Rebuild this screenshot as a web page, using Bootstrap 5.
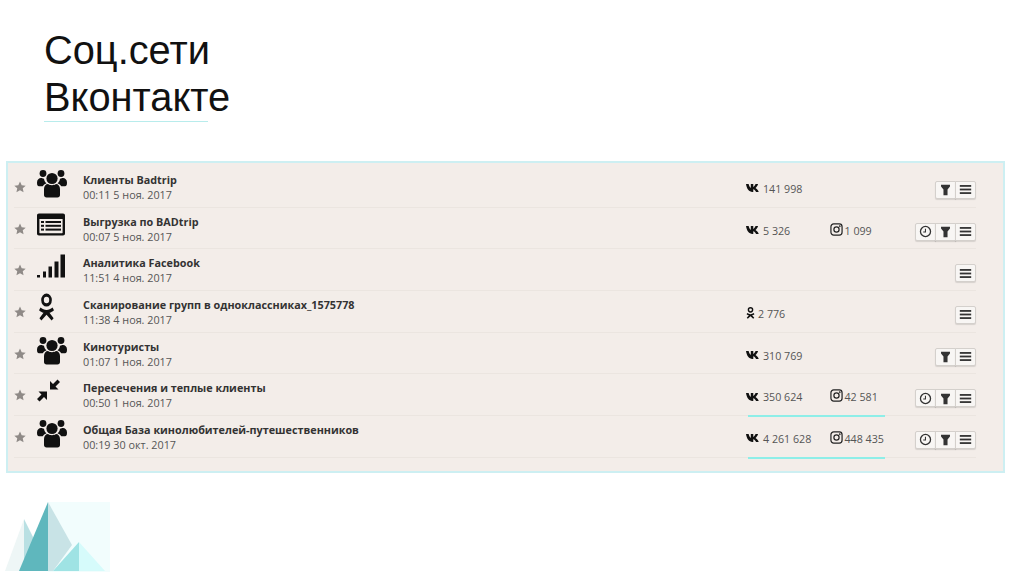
<!DOCTYPE html>
<html lang="ru">
<head>
  <meta charset="UTF-8">
  <meta name="viewport" content="width=device-width, initial-scale=1">
  <title>Соц.сети Вконтакте</title>
  <link href="https://cdn.jsdelivr.net/npm/bootstrap@5.3.2/dist/css/bootstrap.min.css" rel="stylesheet">
  <style>
    body {
      background: #fff;
      height: 574px;
      overflow: hidden;
      font-family: "Open Sans", sans-serif;
    }
    .slide-title {
      font-family: "Liberation Sans", sans-serif;
      font-size: 39.8px;
      line-height: 47px;
      font-weight: 400;
      color: #111;
      margin: 27px 0 0 44px;
      width: 164px;
      white-space: nowrap;
      border-bottom: 1px solid #b8ecec;
      height: 95px;
    }
    .panel-box {
      margin: 39px 19px 0 6px;
      height: 312px;
      background: #f3ede9;
      border: 2px solid #cdeff2;
      padding: 3px 27px 0 6px;
    }
    .task-row {
      height: 41.7px;
      border-bottom: 1px solid #ebe5e0;
    }
    .star-ic { width: 12px; height: 12px; fill: #8f8a87; margin-top: 1px; flex: none; }
    .type-col { width: 47px; margin-bottom: 5px; margin-left: 10px; flex: none; }
    .type-ic { width: 32px; height: 32px; fill: #111; display: block; }
    .task-text { padding-top: 1px; }
    .task-name { font-size: 10.8px; line-height: 15px; font-weight: 700; color: #333; white-space: nowrap; }
    .task-date { font-size: 10.8px; line-height: 15px; color: #555; white-space: nowrap; }
    .stats-col { position: absolute; left: 732px; top: 0; bottom: 0; display: flex; align-items: center; font-size: 10.7px; color: #555; padding-top: 5px; }
    .stat-item { width: 83.5px; display: flex; align-items: center; gap: 2px; white-space: nowrap; }
    .stat-item svg { width: 15px; height: 12px; fill: #111; flex: none; margin-top: -1px; }
    .stat-item svg.ig-ic { width: 13px; height: 13px; margin-top: -3px; fill: none; stroke: #222; stroke-width: 1.3; }
    .stat-item svg.ok-ic { width: 9px; height: 14px; margin-right: 1px; }
    .hl-line { position: absolute; left: 2px; bottom: -2px; width: 137px; height: 2px; background: #8eeee8; }
    .act-group { margin-top: 7px; }
    .act-group .btn {
      width: 21px;
      height: 18px;
      padding: 0;
      display: flex;
      align-items: center;
      justify-content: center;
      background: #f8f6f4;
      border: 1px solid #d4d0cc;
      border-radius: 2px;
      box-shadow: 0 1px 1px rgba(0,0,0,.12);
    }
    .act-group .btn svg { width: 13px; height: 13px; fill: #333; }
    .logo-mark { display: block; margin-top: 27px; }
  </style>
</head>
<body>

<svg width="0" height="0" class="position-absolute">
  <symbol id="i-star" viewBox="0 0 24 24"><path d="M12 1l3.400 7.300 8 1-5.900 5.400 1.600 7.900L12 18.700l-7.100 3.900 1.600-7.900L.6 9.300l8-1z"/></symbol>
  <symbol id="i-users" viewBox="0 0 32 32">
    <circle cx="16" cy="10.500" r="5.600"/><circle cx="7" cy="5.500" r="3.400"/><circle cx="25" cy="5.500" r="3.400"/>
    <path d="M1 14.500c0-3 2-4.500 4-4.500 1 0 1.500.6 3 .8.300 2 1.200 3.500 2.500 4.500-2 .8-3 1.800-3.800 3H3c-1.500 0-2-1.300-2-3.800zM31 14.500c0-3-2-4.500-4-4.500-1 0-1.500.6-3 .8-.3 2-1.200 3.500-2.500 4.500 2 .8 3 1.800 3.800 3H29c1.500 0 2-1.300 2-3.800z"/>
    <path d="M8 21c0-3 1.800-5 4-5 1 .8 2.400 1.200 4 1.200s3-.4 4-1.200c2.200 0 4 2 4 5v6c0 1.500-1 2.500-2.500 2.500h-11C9 29.500 8 28.500 8 27z"/>
  </symbol>
  <symbol id="i-list" viewBox="0 0 32 32">
    <path fill-rule="evenodd" d="M3 3.500h24c1.300 0 2 .8 2 2v18c0 1.200-.7 2-2 2H3c-1.300 0-2-.8-2-2v-18c0-1.200.7-2 2-2zm.4 5.500v13.800c0 .3.200.5.500.5h22.200c.3 0 .5-.2.500-.5V9z"/>
    <rect x="5" y="11" width="3" height="2"/><rect x="9.500" y="11" width="15.500" height="2"/>
    <rect x="5" y="14.800" width="3" height="2"/><rect x="9.500" y="14.800" width="15.500" height="2"/>
    <rect x="5" y="18.600" width="3" height="2"/><rect x="9.500" y="18.600" width="15.500" height="2"/>
  </symbol>
  <symbol id="i-signal" viewBox="0 0 32 32">
    <rect x="1" y="24" width="3" height="2.500"/><rect x="7" y="20.500" width="3" height="6"/><rect x="12.500" y="15.500" width="3.500" height="11"/><rect x="18.500" y="10.500" width="4" height="16"/><rect x="24.500" y="3.500" width="4.500" height="23"/>
  </symbol>
  <symbol id="i-ok" viewBox="0 0 32 32">
    <g transform="translate(-.84 .5) scale(.71 .87)">
      <path fill-rule="evenodd" d="M16 0a7.500 7.500 0 110 15 7.500 7.500 0 010-15zm0 3.700a3.800 3.800 0 100 7.600 3.800 3.800 0 000-7.600z"/>
      <path d="M7.500 16.200c2.700 1.900 5.400 2.800 8.500 2.800s5.800-.9 8.500-2.800l2 3c-2 1.500-4 2.400-6.300 2.900l5.800 6.400-2.800 2.600-7.200-6.600-7.200 6.600-2.800-2.600 5.800-6.400c-2.300-.5-4.300-1.400-6.300-2.900z"/>
    </g>
  </symbol>
  <symbol id="i-compress" viewBox="0 0 32 32">
    <path d="M14 5v8.500h8.500l-3-3L24 6l-2.500-2.500L17 8zM11 15.500V24l-3-3-4.500 4.500L1 23l4.500-4.500-3-3z"/>
  </symbol>
  <symbol id="i-vk" viewBox="0 0 20 12">
    <path d="M0 .8h3.500c.6 2.500 1.700 4.500 2.900 5.300V.8h3.300v3.800c1.200-.5 2.300-2 3-3.800h3.400c-.6 2.300-2 4.200-3.400 5.200 1.700.9 3.200 2.800 4.300 5.200h-3.600c-.8-1.800-2.200-3.300-3.700-3.700v3.700H8.700C4 11.200 1 7.400 0 .8z"/>
  </symbol>
  <symbol id="i-ig" viewBox="0 0 14 14">
    <rect x="1" y="1" width="12" height="12" rx="3"/><circle cx="7" cy="7" r="2.800"/><circle cx="10.500" cy="3.500" r=".3"/>
  </symbol>
  <symbol id="i-ok-sm" viewBox="4 0 24 32">
    <path fill-rule="evenodd" d="M16 0a7.500 7.500 0 110 15 7.500 7.500 0 010-15zm0 3.700a3.800 3.800 0 100 7.600 3.800 3.800 0 000-7.600z"/>
    <path d="M7.500 16.200c2.700 1.900 5.400 2.800 8.500 2.800s5.800-.9 8.500-2.800l2 3c-2 1.500-4 2.400-6.300 2.900l5.800 6.400-2.800 2.600-7.200-6.600-7.200 6.600-2.800-2.600 5.800-6.400c-2.300-.5-4.300-1.400-6.300-2.900z"/>
  </symbol>
  <symbol id="i-clock" viewBox="0 0 16 16">
    <path fill-rule="evenodd" d="M8 1a7 7 0 110 14A7 7 0 018 1zm0 1.600a5.400 5.400 0 100 10.800A5.400 5.400 0 008 2.600z"/><path d="M7.300 4.500h1.300v4.800H5.200V8h2.100z"/>
  </symbol>
  <symbol id="i-filter" viewBox="0 0 16 16"><path d="M2.500 2h11v2.300L10.500 8v7h-5V8l-3-3.700z"/></symbol>
  <symbol id="i-menu" viewBox="0 0 16 16"><rect x="1" y="2.500" width="14" height="2.200"/><rect x="1" y="6.900" width="14" height="2.200"/><rect x="1" y="11.300" width="14" height="2.200"/></symbol>
</svg>

<h1 class="slide-title">Соц.сети<br>Вконтакте</h1>

<div class="panel-box" id="panel"></div>

<svg class="logo-mark" width="112" height="73" viewBox="0 501 112 73">
  <rect x="48" y="503" width="62" height="70" fill="#f2fdfd"/>
  <polygon points="24,520 5,572 24,572" fill="#eef6f6"/>
  <polygon points="24,520 24,572 40,572 34,540" fill="#b9e0e3"/>
  <polygon points="48,503 48,572 53,572 72,546" fill="#c8e3e6"/>
  <polygon points="48,503 19,572 48,572" fill="#5fb7bd"/>
  <polygon points="79,543 53,572 79,572" fill="#9fe3e4"/>
  <polygon points="79,543 79,572 105,572" fill="#d6fbfb"/>
</svg>

<script src="https://cdn.jsdelivr.net/npm/bootstrap@5.3.2/dist/js/bootstrap.bundle.min.js"></script>
<script>
const rows = [
  { ic: "i-users", name: "Клиенты Badtrip", date: "00:11 5 ноя. 2017", stats: [["i-vk", "141 998"]], acts: ["i-filter", "i-menu"] },
  { ic: "i-list", name: "Выгрузка по BADtrip", date: "00:07 5 ноя. 2017", stats: [["i-vk", "5 326"], ["i-ig", "1 099"]], acts: ["i-clock", "i-filter", "i-menu"] },
  { ic: "i-signal", name: "Аналитика Facebook", date: "11:51 4 ноя. 2017", stats: [], acts: ["i-menu"] },
  { ic: "i-ok", name: "Сканирование групп в одноклассниках_1575778", date: "11:38 4 ноя. 2017", stats: [["i-ok-sm", "2 776"]], acts: ["i-menu"] },
  { ic: "i-users", name: "Кинотуристы", date: "01:07 1 ноя. 2017", stats: [["i-vk", "310 769"]], acts: ["i-filter", "i-menu"] },
  { ic: "i-compress", name: "Пересечения и теплые клиенты", date: "00:50 1 ноя. 2017", stats: [["i-vk", "350 624"], ["i-ig", "42 581"]], acts: ["i-clock", "i-filter", "i-menu"], line: true },
  { ic: "i-users", name: "Общая База кинолюбителей-путешественников", date: "00:19 30 окт. 2017", stats: [["i-vk", "4 261 628"], ["i-ig", "448 435"]], acts: ["i-clock", "i-filter", "i-menu"], line: true }
]

const use = (id, cls) => `<svg class="${cls || ""}"><use href="#${id}"></use></svg>`
const statClass = { "i-ig": "ig-ic", "i-ok-sm": "ok-ic" }

document.getElementById("panel").innerHTML = rows.map(r => `
  <div class="task-row d-flex align-items-center position-relative">
    ${use("i-star", "star-ic")}
    <div class="type-col">${use(r.ic, "type-ic")}</div>
    <div class="task-text">
      <div class="task-name">${r.name}</div>
      <div class="task-date">${r.date}</div>
    </div>
    <div class="stats-col">
      ${r.stats.map(s => `<div class="stat-item">${use(s[0], statClass[s[0]])}<span>${s[1]}</span></div>`).join("")}
      ${r.line ? `<span class="hl-line"></span>` : ""}
    </div>
    <div class="btn-group act-group ms-auto">
      ${r.acts.map(a => `<button type="button" class="btn">${use(a)}</button>`).join("")}
    </div>
  </div>
`).join("")
</script>
</body>
</html>
